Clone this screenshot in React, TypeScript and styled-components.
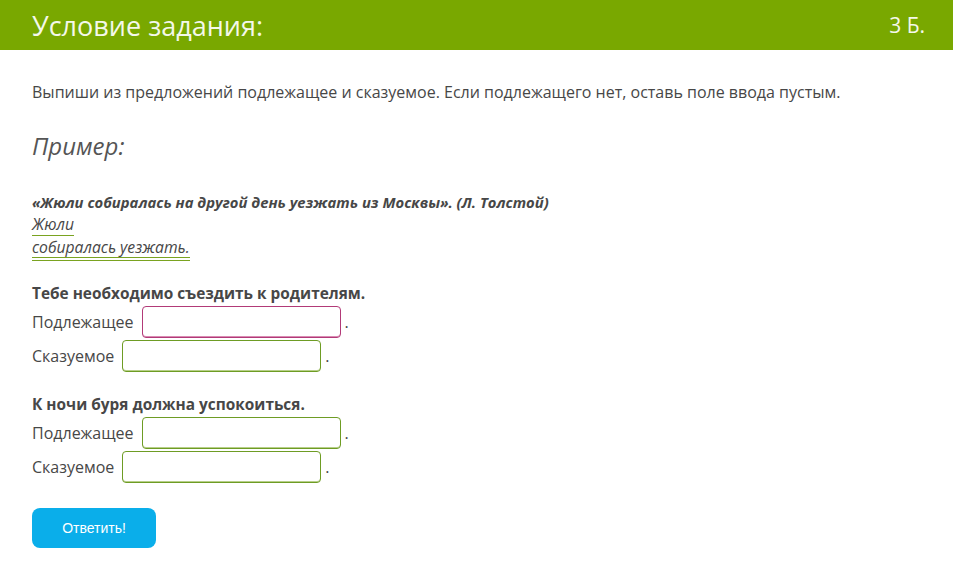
import React from "react";
import styled, { createGlobalStyle } from "styled-components";

const GlobalStyle = createGlobalStyle`
  body {
    margin: 0;
    background: #fff;
    font-family: "Open Sans", "Liberation Sans", sans-serif;
    color: #474747;
  }
`;

const Header = styled.div`
  height: 50px;
  background: #79a800;
  display: flex;
  align-items: center;
  justify-content: space-between;
  padding: 0 28px 0 32px;
  color: #f4f8ea;
`;

const Title = styled.h1`
  margin: 0;
  font-size: 27px;
  font-weight: 400;
`;

const Points = styled.span`
  font-size: 21px;
`;

const Content = styled.div`
  padding: 0 32px;
`;

const Instruction = styled.p`
  margin: 0;
  padding-top: 31px;
  font-size: 16px;
  line-height: 22px;
`;

const ExampleTitle = styled.h2`
  margin: 0;
  padding-top: 27px;
  font-size: 24px;
  font-weight: 400;
  font-style: italic;
  color: #555;
  line-height: 32px;
`;

const Example = styled.div`
  padding-top: 29px;
  font-style: italic;
  font-size: 15.7px;
  line-height: 22px;
`;

const Quote = styled.div`
  font-weight: 700;
  font-size: 14.8px;
`;

const Marked = styled.span<{ $double?: boolean }>`
  display: inline-block;
  line-height: 18px;
  padding-bottom: ${(p) => (p.$double ? "1px" : "2px")};
  border-bottom: ${(p) =>
    p.$double ? "4px double #7aa320" : "1px solid #7aa320"};
`;

const Task = styled.div<{ $gap: number }>`
  padding-top: ${(p) => p.$gap}px;
`;

const Sentence = styled.div`
  font-weight: 700;
  font-size: 15.4px;
  line-height: 23px;
`;

const Row = styled.div`
  display: flex;
  align-items: center;
  height: 34px;
  font-size: 16px;
`;

const Label = styled.span`
  margin-right: 8px;
`;

const Field = styled.input<{ $active?: boolean }>`
  box-sizing: border-box;
  width: 199px;
  height: 32px;
  border-radius: 4px;
  border: 1px solid ${(p) => (p.$active ? "#b23a78" : "#6e9c24")};
  box-shadow: inset 0 -1px 0 ${(p) => (p.$active ? "#d98cb3" : "#b8cf8a")};
  background: #fff;
  outline: none;
  font: inherit;
  padding: 0 6px;
`;

const Dot = styled.span`
  margin-left: 4px;
`;

const Button = styled.button`
  margin-top: 24px;
  width: 124px;
  height: 40px;
  border: none;
  border-radius: 8px;
  background: #0aaeea;
  color: #fff;
  font-family: "Liberation Sans", Arial, sans-serif;
  font-size: 14px;
  cursor: pointer;
`;

const tasks = [
  { text: "Тебе необходимо съездить к родителям.", active: true, gap: 21 },
  { text: "К ночи буря должна успокоиться.", active: false, gap: 20 },
];

export default function App() {
  return (
    <>
      <GlobalStyle />
      <Header>
        <Title>Условие задания:</Title>
        <Points>3 Б.</Points>
      </Header>
      <Content>
        <Instruction>
          Выпиши из предложений подлежащее и сказуемое. Если подлежащего нет,
          оставь поле ввода пустым.
        </Instruction>
        <ExampleTitle>Пример:</ExampleTitle>
        <Example>
          <Quote>
            «Жюли собиралась на другой день уезжать из Москвы». (Л. Толстой)
          </Quote>
          <div>
            <Marked>Жюли</Marked>
          </div>
          <div>
            <Marked $double>собиралась уезжать.</Marked>
          </div>
        </Example>
        {tasks.map((t) => (
          <Task key={t.text} $gap={t.gap}>
            <Sentence>{t.text}</Sentence>
            <Row>
              <Label>Подлежащее</Label>
              <Field $active={t.active} />
              <Dot>.</Dot>
            </Row>
            <Row>
              <Label>Сказуемое</Label>
              <Field />
              <Dot>.</Dot>
            </Row>
          </Task>
        ))}
        <Button>Ответить!</Button>
      </Content>
    </>
  );
}
